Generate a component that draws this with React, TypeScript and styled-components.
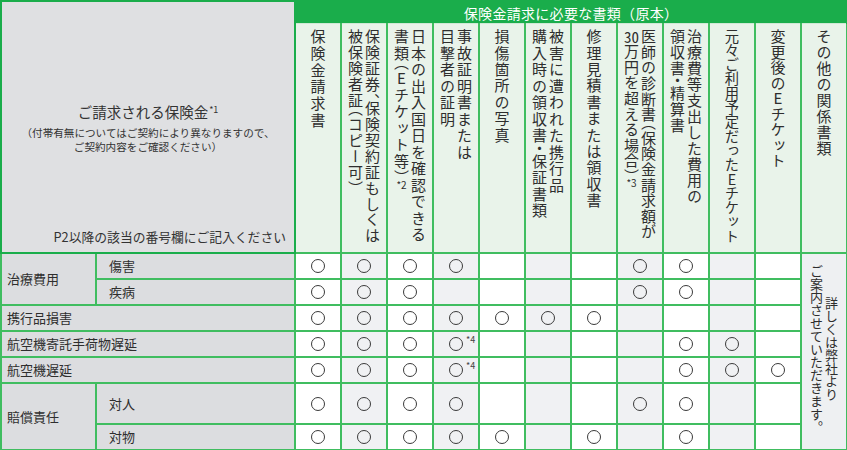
import React from 'react';
import styled, { createGlobalStyle } from 'styled-components';

const GlobalStyle = createGlobalStyle`
  html, body {
    margin: 0;
    padding: 0;
    background: #ffffff;
  }
  body {
    font-family: "Noto Sans CJK JP", "Noto Sans", sans-serif;
    color: #333333;
  }
`;

const GREEN = '#1aad4b';
const LINE = '#40bd60';

const Table = styled.table`
  width: 847px;
  table-layout: fixed;
  border-collapse: collapse;
  border: 2px solid ${GREEN};
`;

const LeftHead = styled.th`
  background: #dfe0e2;
  border: 2px solid ${GREEN};
  padding: 0;
  font-weight: normal;
  vertical-align: top;
`;

const LeftHeadInner = styled.div`
  height: 246px;
  display: flex;
  flex-direction: column;
`;

const TitleBlock = styled.div`
  flex: 1;
  display: flex;
  flex-direction: column;
  justify-content: center;
  align-items: center;
  padding-top: 22px;
`;

const Title = styled.div`
  font-size: 14.5px;
  line-height: 20px;
  margin-bottom: 4px;
  sup {
    font-size: 9px;
    vertical-align: 5px;
    margin-left: 1px;
  }
`;

const SubNote = styled.div`
  font-size: 10.6px;
  line-height: 14px;
  text-align: center;
`;

const Footer = styled.div`
  font-size: 12.8px;
  line-height: 16px;
  text-align: right;
  padding: 0 8px 3px 0;
`;

const Band = styled.th`
  height: 21px;
  padding: 0;
  background: ${GREEN};
  color: #ffffff;
  font-size: 14px;
  font-weight: normal;
  letter-spacing: 0.3px;
  border: 2px solid ${GREEN};
  border-bottom: 1px solid #cfe9d5;
`;

const DocHead = styled.th`
  height: 219px;
  padding: 5px 0 0;
  background: #e9f3ea;
  border: 2px solid ${LINE};
  border-top: none;
  font-weight: normal;
  vertical-align: top;
  text-align: center;
`;

const VText = styled.div<{ $spacing: number; $size: number }>`
  display: inline-block;
  writing-mode: vertical-rl;
  height: 218px;
  text-align: start;
  font-size: ${p => p.$size}px;
  line-height: 17px;
  letter-spacing: ${p => p.$spacing}px;
  font-feature-settings: "vhal" 1;
  color: #2e2e2e;
`;

const Tcy = styled.span`
  text-combine-upright: all;
`;

const Note = styled.span`
  text-combine-upright: all;
  font-size: 10px;
  letter-spacing: 0;
`;

const Upright = styled.span`
  text-orientation: upright;
`;

const Label = styled.td<{ $indent: number }>`
  height: 24px;
  background: #dcdde0;
  border: 2px solid ${LINE};
  padding: 0 0 0 ${p => p.$indent}px;
  font-size: 13px;
  line-height: 18px;
  white-space: nowrap;
  color: #2e2e2e;
`;

const Mark = styled.td<{ $shade: boolean }>`
  height: 24px;
  padding: 0;
  border: 2px solid ${LINE};
  background: ${p => (p.$shade ? '#f0f1f3' : '#ffffff')};
  text-align: center;
  vertical-align: middle;
  line-height: 14px;
  font-size: 0;
`;

const Circle = styled.span`
  position: relative;
  display: inline-block;
  width: 12px;
  height: 12px;
  border: 1.4px solid #3a3a3a;
  border-radius: 50%;
  vertical-align: middle;
`;

const CircleNote = styled.span`
  position: absolute;
  left: 16px;
  top: -3px;
  font-size: 9px;
  line-height: 10px;
  color: #444;
  white-space: nowrap;
`;

const OtherCell = styled.td`
  padding: 0;
  background: #eef0f2;
  border: 2px solid ${LINE};
  text-align: center;
  vertical-align: middle;
`;

const OtherText = styled.div`
  display: inline-block;
  writing-mode: vertical-rl;
  height: 190px;
  text-align: center;
  font-size: 13px;
  line-height: 15px;
  color: #2e2e2e;
`;

type Doc = { text: React.ReactNode; spacing: number; size?: number };

const docs: Doc[] = [
  { text: '保険金請求書', spacing: 1.7 },
  { text: <>保険証券、保険契約証もしくは<br />被保険者証（コピー可）</>, spacing: 0.9 },
  { text: <>日本の出入国日を確認できる<br />書類（<Upright>E</Upright>チケット等）<Note>*2</Note></>, spacing: 1.5 },
  { text: <>事故証明書または<br />目撃者の証明</>, spacing: 1.5 },
  { text: '損傷箇所の写真', spacing: 1.4 },
  { text: <>被害に遭われた携行品<br />購入時の領収書・保証書類</>, spacing: 1.5 },
  { text: '修理見積書または領収書', spacing: 1.4 },
  { text: <>医師の診断書（保険金請求額が<br /><Tcy>30</Tcy>万円を超える場合）<Note>*3</Note></>, spacing: 0.6 },
  { text: <>治療費等支出した費用の<br />領収書・精算書</>, spacing: 1 },
  { text: <>元々ご利用予定だった<Upright>E</Upright>チケット</>, spacing: 0, size: 14.3 },
  { text: <>変更後の<Upright>E</Upright>チケット</>, spacing: 0.5 },
  { text: 'その他の関係書類', spacing: 1 },
];

type Row = {
  group?: string;
  label?: string;
  sub?: string;
  marks: number[];
  noted?: boolean;
};

const rows: Row[] = [
  { group: '治療費用', sub: '傷害', marks: [1, 2, 3, 4, 8, 9] },
  { sub: '疾病', marks: [1, 2, 3, 8, 9] },
  { label: '携行品損害', marks: [1, 2, 3, 4, 5, 6, 7] },
  { label: '航空機寄託手荷物遅延', marks: [1, 2, 3, 4, 9, 10], noted: true },
  { label: '航空機遅延', marks: [1, 2, 3, 4, 9, 10, 11], noted: true },
  { group: '賠償責任', sub: '対人', marks: [1, 2, 3, 4, 8, 9] },
  { sub: '対物', marks: [1, 2, 3, 4, 5, 7, 9] },
];

function MarkCells({ row }: { row: Row }): JSX.Element {
  const cols = Array.from({ length: 11 }, (_, i) => i + 1);
  return (
    <>
      {cols.map(c => (
        <Mark key={c} $shade={c % 2 === 0}>
          {row.marks.includes(c) && (
            <Circle>{row.noted && c === 4 && <CircleNote>*4</CircleNote>}</Circle>
          )}
        </Mark>
      ))}
    </>
  );
}

export default function App(): JSX.Element {
  return (
    <>
      <GlobalStyle />
      <Table>
        <colgroup>
          <col style={{ width: 95 }} />
          <col style={{ width: 199 }} />
          {docs.map((_, i) => (
            <col key={i} style={{ width: 46 }} />
          ))}
        </colgroup>
        <tbody>
          <tr>
            <LeftHead colSpan={2} rowSpan={2}>
              <LeftHeadInner>
                <TitleBlock>
                  <Title>
                    ご請求される保険金<sup>*1</sup>
                  </Title>
                  <SubNote>
                    （付帯有無についてはご契約により異なりますので、
                    <br />
                    ご契約内容をご確認ください）
                  </SubNote>
                </TitleBlock>
                <Footer>P2以降の該当の番号欄にご記入ください</Footer>
              </LeftHeadInner>
            </LeftHead>
            <Band colSpan={12}>保険金請求に必要な書類（原本）</Band>
          </tr>
          <tr>
            {docs.map((d, i) => (
              <DocHead key={i}>
                <VText $spacing={d.spacing} $size={d.size ?? 15}>
                  {d.text}
                </VText>
              </DocHead>
            ))}
          </tr>
          {rows.map((row, i) => (
            <tr key={i}>
              {row.group && (
                <Label $indent={5} rowSpan={2}>
                  {row.group}
                </Label>
              )}
              {row.label ? (
                <Label $indent={5} colSpan={2}>
                  {row.label}
                </Label>
              ) : (
                <Label $indent={12}>{row.sub}</Label>
              )}
              <MarkCells row={row} />
              {i === 0 && (
                <OtherCell rowSpan={7}>
                  <OtherText>
                    詳しくは弊社より
                    <br />
                    ご案内させていただきます。
                  </OtherText>
                </OtherCell>
              )}
            </tr>
          ))}
        </tbody>
      </Table>
    </>
  );
}
